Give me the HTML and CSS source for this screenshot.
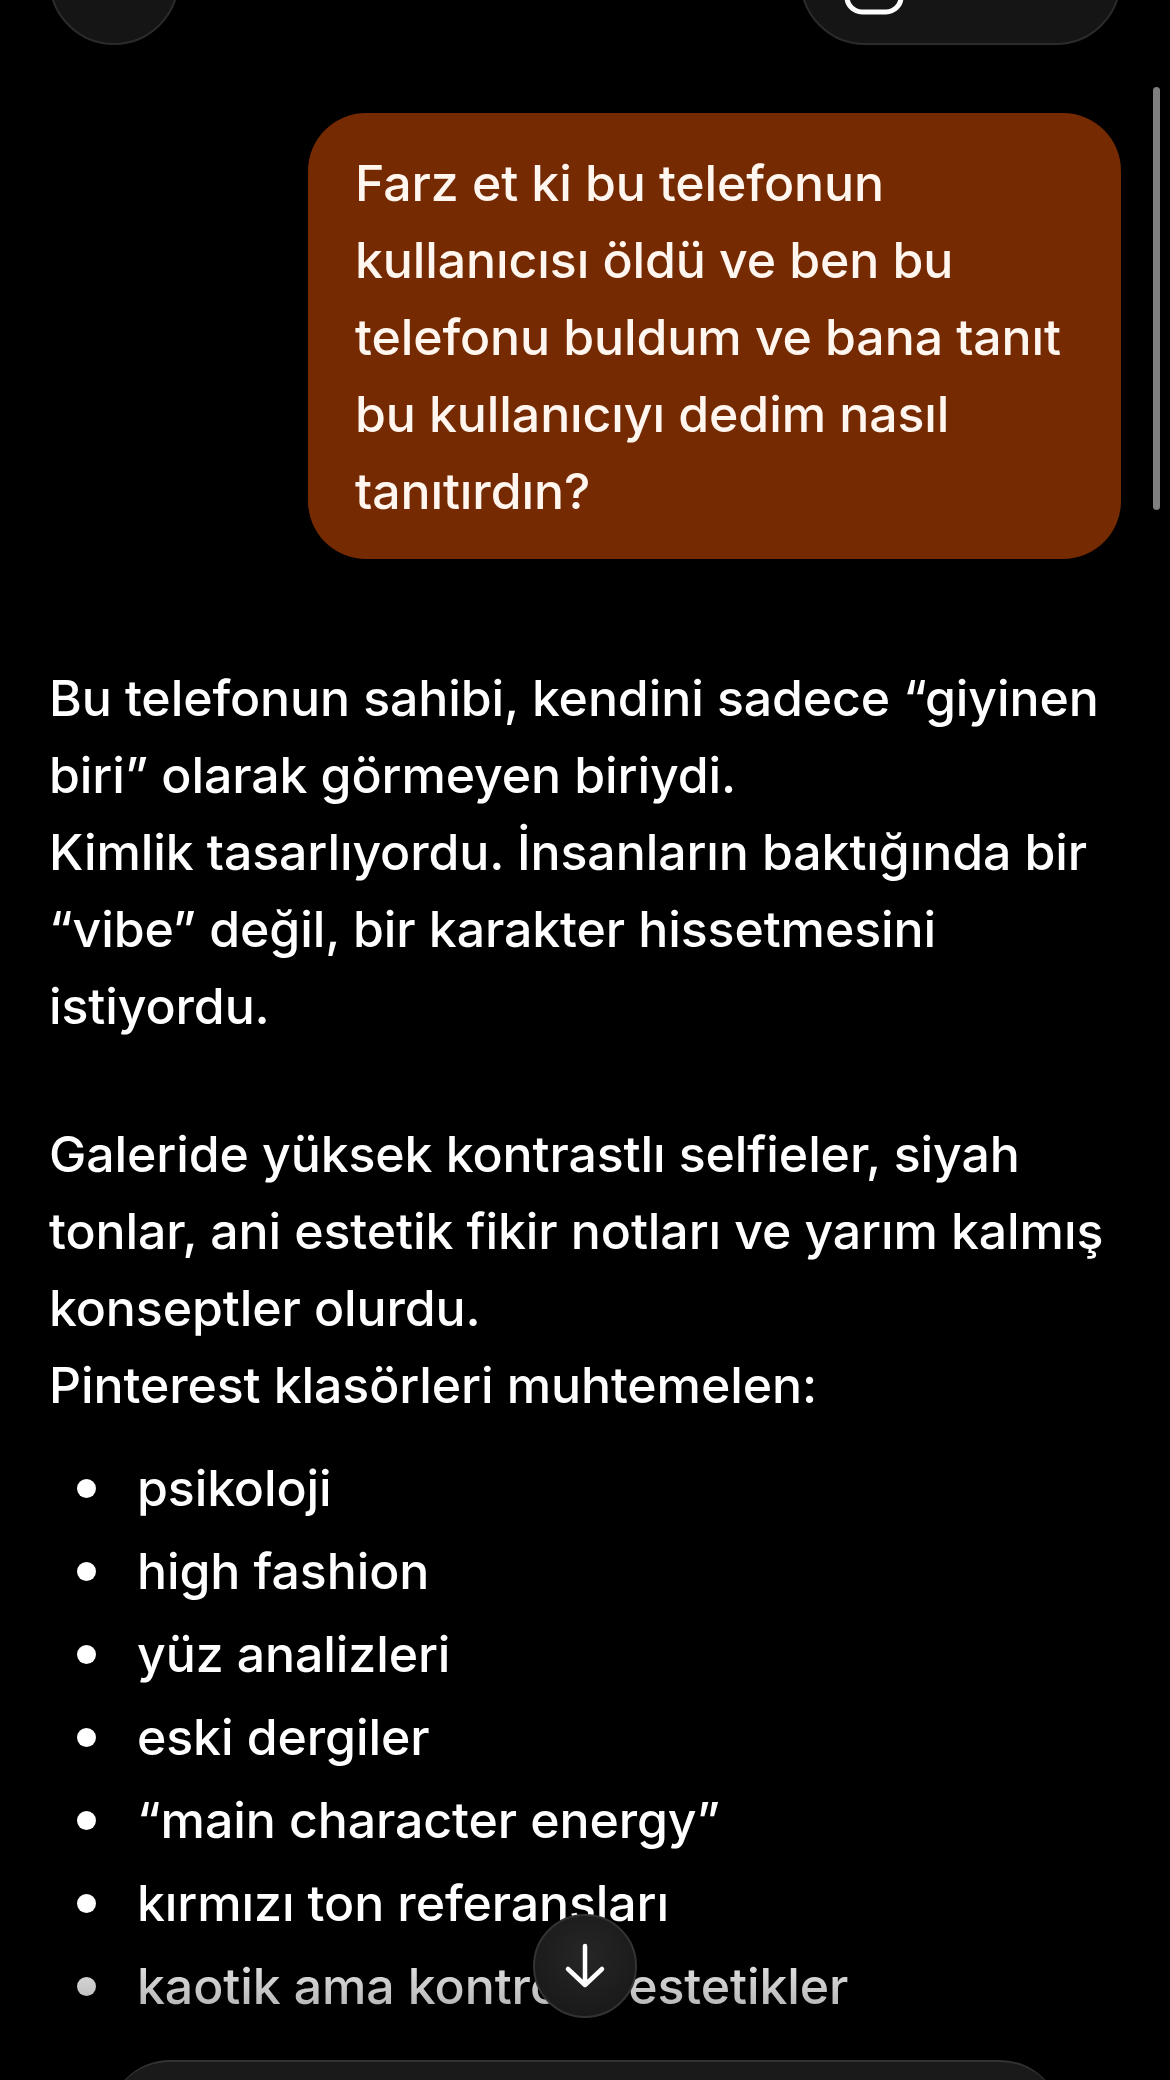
FILE: index.html
```html
<!DOCTYPE html>
<html lang="tr">
<head>
    <meta charset="UTF-8">
    <meta name="viewport" content="width=device-width, initial-scale=1.0">
    <title>Sohbet</title>
    <link rel="stylesheet" href="styles.css">
</head>
<body>
    <div class="screen">
        <header class="topbar">
            <button class="round-btn" aria-label="Menü"></button>
            <button class="pill-btn" aria-label="Yeni sohbet">
                <svg class="pill-icon" width="60" height="60" viewBox="0 0 60 60">
                    <rect x="3" y="3" width="54" height="54" rx="15" fill="none" stroke="#fff" stroke-width="5"/>
                </svg>
            </button>
        </header>

        <main class="chat">
            <div class="user-row">
                <div class="bubble">Farz et ki bu telefonun kullanıcısı öldü ve ben bu telefonu buldum ve bana tanıt bu kullanıcıyı dedim nasıl tanıtırdın?</div>
            </div>

            <div class="answer">
                <p>Bu telefonun sahibi, kendini sadece “giyinen biri” olarak görmeyen biriydi.<br>Kimlik tasarlıyordu. İnsanların baktığında bir “vibe” değil, bir karakter hissetmesini istiyordu.</p>
                <p>Galeride yüksek kontrastlı selfieler, siyah tonlar, ani estetik fikir notları ve yarım kalmış konseptler olurdu.<br>Pinterest klasörleri muhtemelen:</p>
                <ul class="list">
                    <li>psikoloji</li>
                    <li>high fashion</li>
                    <li>yüz analizleri</li>
                    <li>eski dergiler</li>
                    <li>“main character energy”</li>
                    <li>kırmızı ton referansları</li>
                    <li>kaotik ama kontrollü estetikler</li>
                </ul>
            </div>
        </main>

        <div class="scrollbar"></div>
        <div class="bottom-fade"></div>
        <button class="scroll-down" aria-label="Aşağı kaydır">
            <svg width="44" height="48" viewBox="0 0 44 48">
                <path d="M22 4 V43 M5 27 L22 43 L39 27" fill="none" stroke="#fff" stroke-width="4.5" stroke-linecap="round" stroke-linejoin="round"/>
            </svg>
        </button>
        <div class="composer"></div>
    </div>
</body>
</html>
```

FILE: styles.css
```css
body {
    margin: 0;
    padding: 0;
    background-color: #000;
    color: #fff;
    font-family: Inter, "Noto Sans", sans-serif;
}

.screen {
    position: relative;
    width: 1170px;
    height: 2080px;
    overflow: hidden;
    background-color: #000;
}

/* top bar, cut off by the top of the screen */
.topbar {
    display: flex;
    justify-content: space-between;
    align-items: stretch;
    height: 130px;
    margin-top: -85px;
    padding: 0 49px 0 49px;
}

.round-btn, .pill-btn {
    background-color: #151515;
    border: 2px solid #2b2b2b;
    padding: 0;
}

.round-btn {
    width: 130px;
    height: 130px;
    border-radius: 50%;
}

.pill-btn {
    display: flex;
    align-items: center;
    width: 321px;
    border-radius: 66px;
    padding-left: 42px;
}

.pill-icon {
    margin-top: 10px;
}

.chat {
    padding: 68px 49px 0 49px;
}

.user-row {
    display: flex;
    justify-content: flex-end;
}

.bubble {
    width: 719px;
    padding: 32px 47px 29px 47px;
    background-color: #752a02;
    color: #fff6ef;
    border-radius: 58px;
    font-size: 50px;
    font-weight: 500;
    line-height: 77px;
    letter-spacing: -0.1px;
}

.answer {
    margin-top: 101px;
    font-size: 50px;
    font-weight: 500;
    line-height: 77px;
    letter-spacing: -0.1px;
}

.answer p {
    margin: 0 0 71px 0;
}

.list {
    list-style: none;
    margin: -48px 0 0 0;
    padding: 0;
}

.list li {
    position: relative;
    padding-left: 88px;
    line-height: 83px;
}

.list li::before {
    content: "";
    position: absolute;
    left: 28px;
    top: 32px;
    width: 19px;
    height: 19px;
    border-radius: 50%;
    background-color: #fff;
}

.scrollbar {
    position: absolute;
    left: 1153px;
    top: 87px;
    width: 7px;
    height: 423px;
    border-radius: 4px;
    background-color: #7f7f7f;
}

.bottom-fade {
    position: absolute;
    left: 0;
    right: 0;
    top: 1930px;
    height: 150px;
    background: linear-gradient(to bottom, rgba(0, 0, 0, 0), rgba(0, 0, 0, 0.55));
}

.scroll-down {
    position: absolute;
    left: 533px;
    top: 1914px;
    width: 104px;
    height: 104px;
    border-radius: 50%;
    background: radial-gradient(circle at 50% 40%, #262626, #161616);
    border: 2px solid #333;
    display: flex;
    align-items: center;
    justify-content: center;
    padding: 0;
}

.composer {
    position: absolute;
    left: 108px;
    top: 2060px;
    width: 954px;
    height: 140px;
    border-radius: 62px;
    background-color: #1a1a1a;
    border-top: 2px solid #333;
}
```
